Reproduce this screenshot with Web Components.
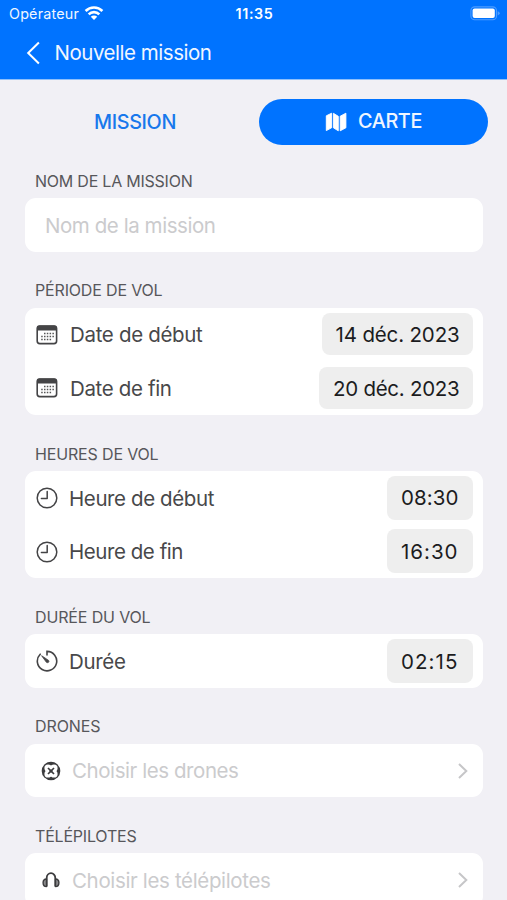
<!DOCTYPE html>
<html lang="fr">
<head>
<meta charset="utf-8">
<title>Nouvelle mission</title>
<style>
html,body{margin:0;height:900px;overflow:hidden}
body{font-family:Inter,"Liberation Sans",sans-serif;background:#f1f0f5;color:#48484a}
</style>
</head>
<body>
<mission-app></mission-app>
<script>
const define = (name, html, setup) => {
  const t = document.createElement('template');
  t.innerHTML = html;
  customElements.define(name, class extends HTMLElement {
    constructor() {
      super();
      this.attachShadow({mode: 'open'}).append(t.content.cloneNode(true));
    }
    connectedCallback() { if (setup) setup(this, this.shadowRoot); }
  });
};

// Text whose tracking is adjusted so that it fills the width given in "w".
define('fit-text', `<style>:host{display:block;white-space:nowrap;line-height:1.2;flex:none}span{display:inline-block}</style><span><slot></slot></span>`,
  (el, root) => {
    const s = root.querySelector('span');
    const w = +el.getAttribute('w');
    el.style.width = w + 'px';
    const n = el.textContent.length;
    s.style.letterSpacing = ((w - s.getBoundingClientRect().width) / n).toFixed(3) + 'px';
  });

const icons = {
  wifi: [20, 14, `<g fill="none" stroke="#fff" stroke-width="2.6"><path d="M1.6 5A12 12 0 0 1 18.4 5"/><path d="M4.7 8.4A7.4 7.4 0 0 1 15.3 8.4"/></g><path fill="#fff" d="M6.8 10.7A4.6 4.6 0 0 1 13.2 10.7L10 13.9Z"/>`],
  battery: [30, 15, `<rect x=".9" y=".9" width="25.6" height="12.8" rx="3.8" fill="none" stroke="#4d9dff" stroke-width="1.1"/><rect x="2.6" y="2.6" width="22.2" height="9.4" rx="2" fill="#fff"/><path d="M27.7 5.2q2 .7 2 2.1t-2 2.1z" fill="#4d9dff"/>`],
  back: [14, 24, `<path d="M12.9 1.5 2.2 12 12.9 22.5" fill="none" stroke="#fff" stroke-width="2"/>`],
  map: [22, 20, `<g fill="#fff" stroke="#fff" stroke-linejoin="round" stroke-width=".9"><path d="M1.3 3.8 6.6 1.2V15.8L1.3 18.6ZM8.4 1.3 13.3 4.3V18.8L8.4 15.8ZM15.2 4.2 20.9 1.2V15.8L15.2 18.8Z"/></g>`],
  calendar: [22, 20, `<rect x="1.2" y="1" width="19.4" height="17.6" rx="2.6" fill="none" stroke="#444446" stroke-width="1.6"/><path fill="#444446" d="M1 5.4V3Q1 .6 3.4.6H18.4Q20.8.6 20.8 3V5.4Z"/><g stroke="#555" stroke-width="1.5" stroke-dasharray="1.5 1.3"><path d="M8 8.4h9.9M5.2 11.5h12.7M5.2 14.6h9.9"/></g>`],
  clock: [22, 22, `<g fill="none" stroke="#444446" stroke-width="1.5"><circle cx="11" cy="11" r="9.8"/><path d="M11.2 4.5V11.4H5.4" stroke-linecap="round" stroke-linejoin="round"/></g>`],
  timer: [22, 22, `<g fill="none" stroke="#444446" stroke-width="1.6" stroke-linecap="round"><path d="M11 5V1.4A9.7 9.7 0 1 1 4.2 4.2"/></g><path fill="#444446" stroke="#444446" stroke-linejoin="round" stroke-width=".8" d="M5.6 5.7 12.6 10.4Q13.3 11.5 12.5 12.3 11.5 13 10.4 12.3Z"/>`],
  drone: [20, 20, `<circle cx="10" cy="10" r="9.3" fill="#3c3c3e"/><g fill="#fff"><circle cx="7" cy="7" r="3.6"/><circle cx="13" cy="7" r="3.6"/><circle cx="7" cy="13" r="3.6"/><circle cx="13" cy="13" r="3.6"/><path d="M7 4.6h6v10.8H7zM4.6 7h10.8v6H4.6z"/></g><path d="M7 7 13 13M13 7 7 13" stroke="#3c3c3e" stroke-width="1.7"/><circle cx="10" cy="10" r="1.6" fill="#3c3c3e"/>`],
  headset: [18, 16, `<g fill="none" stroke="#3c3c3e" stroke-width="1.8"><path d="M4.7 14.6V6A4.3 4.9 0 0 1 13.3 6V14.6"/><path d="M4.5 7Q1.1 7 1.1 10.8T4.5 14.6ZM13.5 7Q16.9 7 16.9 10.8T13.5 14.6Z" fill="#8a8a8c" stroke-width="1.4" stroke-linejoin="round"/></g>`],
  next: [10, 16, `<path d="M1 1.1 8.3 8 1 14.9" fill="none" stroke="#c6c6c8" stroke-width="2"/>`]
};
define('app-icon', `<style>:host{display:block;flex:none}svg{display:block}</style>`, (el, root) => {
  const [w, h, body] = icons[el.getAttribute('name')];
  root.innerHTML += `<svg width="${w}" height="${h}" viewBox="0 0 ${w} ${h}">${body}</svg>`;
});

define('app-header', `<style>
:host{display:block;box-sizing:border-box;height:80px;background:#0073ff;border-bottom:1px solid #8fc0fb;color:#f0f6ff}
.status{display:grid;grid-template-columns:1fr auto 1fr;align-items:center;height:27px;padding:0 7px 0 9px;font-size:14.3px}
.left{display:flex;gap:5px;align-items:center}.status>app-icon{justify-self:end}
.left app-icon{margin-top:-1px}
.status fit-text{padding-top:1px}
.time{font-weight:600;color:#fff}
.nav{display:flex;align-items:center;height:52px;padding-left:26px;gap:14.5px;font-size:20.5px}
</style><div class="status"><div class="left"><fit-text w="70">Opérateur</fit-text><app-icon name="wifi"></app-icon></div><fit-text class="time" w="38">11:35</fit-text><app-icon name="battery"></app-icon></div>
<div class="nav"><app-icon name="back"></app-icon><fit-text w="157">Nouvelle mission</fit-text></div>`);

define('view-tabs', `<style>
:host{display:flex;padding:19px 19px 0;height:46px;font-size:19.8px;font-weight:500}
div{display:flex;align-items:center;justify-content:center;flex:1}
fit-text{margin-top:1px}
.off{color:#1878ec;padding-right:8px}
.on{box-sizing:border-box;flex:none;width:229px;height:45.5px;border-radius:23px;background:#0073ff;color:#eff6ff;gap:11px}
</style><div class="off"><fit-text w="82">MISSION</fit-text></div><div class="on"><app-icon name="map"></app-icon><fit-text w="64">CARTE</fit-text></div>`);

define('form-section', `<style>
:host{display:block;padding:0 24.5px 0 25px}
.label{box-sizing:border-box;height:56px;padding:29.9px 0 0 10px;font-size:16px;color:#57575b}
.card{background:#fff;border-radius:11px}
</style><div class="label"><slot name="label"></slot></div><div class="card"><slot></slot></div>`);

define('form-row', `<style>
:host{display:flex;align-items:center;height:53.6px;padding:0 10px 0 11px;font-size:20.5px;color:#48484a}
:host([hint]){color:#cbcbcd}
.text{flex:1;margin-left:var(--gap,12px);padding-top:2.6px}
</style><slot name="icon"></slot><div class="text"><slot></slot></div><slot name="end"></slot>`);

define('value-chip', `<style>
:host{display:flex;box-sizing:border-box;align-items:center;height:42px;padding:2.4px 13px 0 14px;background:#eee;border-radius:8px;color:#1c1c1e}
:host([tall]){height:44px;padding-right:14px}
</style><slot></slot>`);

define('mission-app', `<style>
:host{display:block;width:507px;height:900px;overflow:hidden}
main{display:block;margin-top:-3px}
app-icon[slot=icon]{padding-top:1px}
</style>
<app-header></app-header>
<view-tabs></view-tabs>
<main>
<form-section><fit-text slot="label" w="157.5">NOM DE LA MISSION</fit-text>
<form-row hint style="--gap:9px"><fit-text w="170.5">Nom de la mission</fit-text></form-row></form-section>
<form-section><fit-text slot="label" w="127.5">PÉRIODE DE VOL</fit-text>
<form-row><app-icon slot="icon" name="calendar"></app-icon><fit-text w="132.5">Date de début</fit-text><value-chip slot="end"><fit-text w="124">14 déc. 2023</fit-text></value-chip></form-row>
<form-row><app-icon slot="icon" name="calendar"></app-icon><fit-text w="101.5">Date de fin</fit-text><value-chip slot="end"><fit-text w="126.5">20 déc. 2023</fit-text></value-chip></form-row></form-section>
<form-section><fit-text slot="label" w="123.5">HEURES DE VOL</fit-text>
<form-row style="--gap:11px"><app-icon slot="icon" name="clock"></app-icon><fit-text w="145">Heure de début</fit-text><value-chip tall slot="end"><fit-text w="57.5">08:30</fit-text></value-chip></form-row>
<form-row style="--gap:11px"><app-icon slot="icon" name="clock"></app-icon><fit-text w="114">Heure de fin</fit-text><value-chip tall slot="end"><fit-text w="57.5">16:30</fit-text></value-chip></form-row></form-section>
<form-section><fit-text slot="label" w="115.5">DURÉE DU VOL</fit-text>
<form-row style="--gap:11px"><app-icon slot="icon" name="timer"></app-icon><fit-text w="56.5">Durée</fit-text><value-chip tall slot="end"><fit-text w="57.5">02:15</fit-text></value-chip></form-row></form-section>
<form-section><fit-text slot="label" w="65.5">DRONES</fit-text>
<form-row hint style="--gap:11px"><app-icon slot="icon" name="drone" style="margin-left:5px"></app-icon><fit-text w="166.5">Choisir les drones</fit-text><app-icon slot="end" name="next" style="margin:1px 5px 0 0"></app-icon></form-row></form-section>
<form-section><fit-text slot="label" w="101.5">TÉLÉPILOTES</fit-text>
<form-row hint style="--gap:12px"><app-icon slot="icon" name="headset" style="margin-left:6px;padding:0"></app-icon><fit-text w="198.5">Choisir les télépilotes</fit-text><app-icon slot="end" name="next" style="margin:1px 5px 0 0"></app-icon></form-row></form-section>
</main>`);
</script>
</body>
</html>
